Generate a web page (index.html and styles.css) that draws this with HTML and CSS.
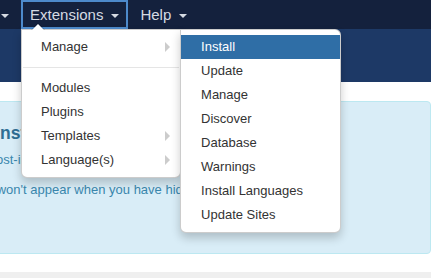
FILE: index.html
```
<!DOCTYPE html>
<html lang="en">
<head>
    <meta charset="UTF-8">
    <meta name="viewport" content="width=device-width, initial-scale=1.0">
    <title>Control Panel</title>
    <link rel="stylesheet" href="styles.css">
</head>
<body>
    <header class="navbar">
        <ul class="nav">
            <li class="nav-item">
                <a class="nav-link" href="#">Components <span class="caret"></span></a>
            </li>
            <li class="nav-item open">
                <a class="nav-link active" href="#">Extensions <span class="caret"></span></a>
                <ul class="dropdown-menu main-menu">
                    <li class="dropdown-submenu">
                        <a href="#">Manage</a>
                        <ul class="dropdown-menu submenu">
                            <li class="active"><a href="#">Install</a></li>
                            <li><a href="#">Update</a></li>
                            <li><a href="#">Manage</a></li>
                            <li><a href="#">Discover</a></li>
                            <li><a href="#">Database</a></li>
                            <li><a href="#">Warnings</a></li>
                            <li><a href="#">Install Languages</a></li>
                            <li><a href="#">Update Sites</a></li>
                        </ul>
                    </li>
                    <li class="divider"></li>
                    <li><a href="#">Modules</a></li>
                    <li><a href="#">Plugins</a></li>
                    <li class="dropdown-submenu"><a href="#">Templates</a></li>
                    <li class="dropdown-submenu"><a href="#">Language(s)</a></li>
                </ul>
            </li>
            <li class="nav-item">
                <a class="nav-link" href="#">Help <span class="caret"></span></a>
            </li>
        </ul>
    </header>

    <div class="subhead"></div>

    <main class="content">
        <div class="alert">
            <h4>You have post-installation messages</h4>
            <p>There are important post-installation messages that require your attention.</p>
            <p>This information area won't appear when you have hidden all the messages.</p>
            <a class="btn" href="#">Read Messages</a>
        </div>
    </main>

    <div class="status-strip"></div>
</body>
</html>
```

FILE: styles.css
```
body {
    margin: 0;
    font-family: 'Liberation Sans', Arial, sans-serif;
    color: #333;
    background-color: #fff;
    overflow: hidden;
}
ul {
    margin: 0;
    padding: 0;
    list-style: none;
}
a {
    text-decoration: none;
}
.navbar {
    background-color: #14213d;
    height: 29px;
    position: relative;
    z-index: 10;
}
.nav {
    display: flex;
    gap: 3px;
    margin-left: -101px;
    height: 29px;
}
.nav-item {
    position: relative;
}
.nav-link {
    display: flex;
    align-items: center;
    gap: 8px;
    box-sizing: border-box;
    height: 29px;
    padding: 0 9px;
    color: #d6dbe3;
    font-size: 15px;
}
.nav-link.active {
    border: 2px solid #4d8acb;
    padding: 0 7px;
}
.caret {
    width: 0;
    height: 0;
    border-top: 4px solid #d6dbe3;
    border-left: 4px solid transparent;
    border-right: 4px solid transparent;
    margin-top: 2px;
}
.dropdown-menu {
    position: absolute;
    box-sizing: border-box;
    width: 160px;
    padding: 5px 0;
    background-color: #fff;
    border: 1px solid rgba(0, 0, 0, 0.2);
    box-shadow: 0 5px 10px rgba(0, 0, 0, 0.2);
}
.main-menu {
    top: 100%;
    left: 0;
    border-radius: 0 0 6px 6px;
}
.main-menu:before {
    content: '';
    position: absolute;
    top: -7px;
    left: 9px;
    border-left: 7px solid transparent;
    border-right: 7px solid transparent;
    border-bottom: 7px solid rgba(0, 0, 0, 0.2);
}
.main-menu:after {
    content: '';
    position: absolute;
    top: -6px;
    left: 10px;
    border-left: 6px solid transparent;
    border-right: 6px solid transparent;
    border-bottom: 6px solid #fff;
}
.dropdown-menu a {
    display: block;
    padding: 3px 20px 3px 19px;
    line-height: 18px;
    font-size: 13px;
    color: #333;
    white-space: nowrap;
}
.dropdown-submenu {
    position: relative;
}
.dropdown-submenu > a:after {
    content: '';
    position: absolute;
    right: 10px;
    top: 7px;
    border-top: 5px solid transparent;
    border-bottom: 5px solid transparent;
    border-left: 5px solid #ccc;
}
.divider {
    height: 1px;
    margin: 8px 1px;
    background-color: #e5e5e5;
}
.submenu {
    top: -6px;
    left: 100%;
    width: 161px;
    border-radius: 0 6px 6px 6px;
}
.submenu li a {
    padding-left: 20px;
}
.submenu .active a {
    background-color: #2f6ea6;
    color: #fff;
}
.subhead {
    background-color: #1d3966;
    height: 53px;
}
.content {
    padding-top: 19px;
    margin-left: -145px;
    padding-bottom: 18px;
}
.alert {
    box-sizing: border-box;
    height: 153px;
    padding: 20px 35px 0 15px;
    background-color: #d9edf7;
    border: 1px solid #bce8f1;
    border-radius: 4px;
    color: #3a87ad;
    font-size: 13px;
    line-height: 18px;
}
.alert h4 {
    margin: 0 0 7px;
    font-size: 17.5px;
    line-height: 22px;
    color: #2f6f94;
}
.alert p {
    margin: 0 0 12px;
}
.btn {
    display: inline-block;
    padding: 4px 12px;
    font-size: 13px;
    color: #fff;
    background-color: #2f6ea6;
    border-radius: 3px;
}
.status-strip {
    height: 20px;
    background-color: #efefef;
}
```
